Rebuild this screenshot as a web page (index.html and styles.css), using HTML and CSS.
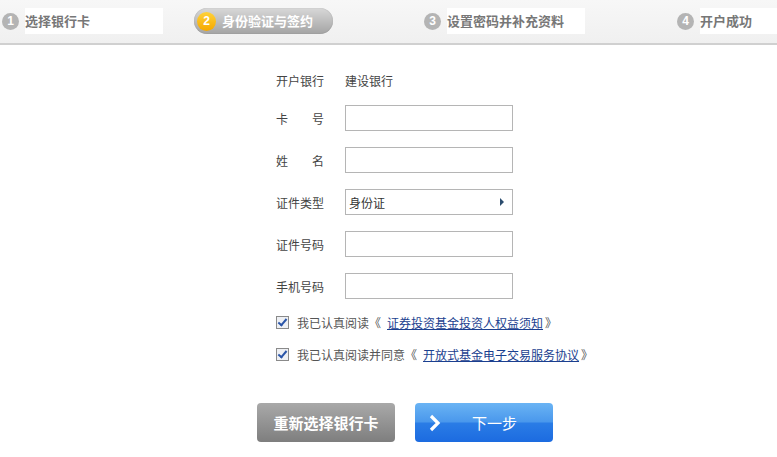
FILE: index.html
```html
<!DOCTYPE html>
<html lang="zh-CN">
<head>
    <meta charset="UTF-8">
    <title>开户 - 身份验证与签约</title>
    <link rel="stylesheet" href="styles.css">
</head>
<body>

    <!-- 步骤条 -->
    <div class="steps">
        <div class="step step-1"><span class="num">1</span><span class="name">选择银行卡</span></div>
        <div class="step step-2 current"><span class="num">2</span><span class="name">身份验证与签约</span></div>
        <div class="step step-3"><span class="num">3</span><span class="name">设置密码并补充资料</span></div>
        <div class="step step-4"><span class="num">4</span><span class="name">开户成功</span></div>
    </div>

    <div class="form">
        <div class="row row-bank">
            <label>开户银行</label>
            <span class="value">建设银行</span>
        </div>
        <div class="row">
            <label>卡　　号</label>
            <input type="text" class="field">
        </div>
        <div class="row">
            <label>姓　　名</label>
            <input type="text" class="field">
        </div>
        <div class="row">
            <label>证件类型</label>
            <div class="field select">
                <span>身份证</span>
                <i class="arrow"></i>
            </div>
        </div>
        <div class="row">
            <label>证件号码</label>
            <input type="text" class="field">
        </div>
        <div class="row">
            <label>手机号码</label>
            <input type="text" class="field">
        </div>

        <div class="agree agree-first">
            <span class="check"></span>
            <span>我已认真阅读《<a href="#">证券投资基金投资人权益须知</a>》</span>
        </div>
        <div class="agree">
            <span class="check"></span>
            <span>我已认真阅读并同意《<a href="#">开放式基金电子交易服务协议</a>》</span>
        </div>
    </div>

    <div class="actions">
        <button class="btn btn-gray">重新选择银行卡</button>
        <button class="btn btn-blue">
            <svg class="chev" width="14" height="18" viewBox="0 0 14 18"><path d="M3 2 L10 9 L3 16" fill="none" stroke="#fff" stroke-width="3.2"/></svg>
            <span>下一步</span>
        </button>
    </div>

</body>
</html>
```

FILE: styles.css
```css
body {
    margin: 0;
    padding: 0;
    background-color: #ffffff;
    font-family: "Noto Sans CJK SC", "DejaVu Sans", sans-serif;
    font-size: 12px;
    color: #444;
}

/* 步骤条 */
.steps {
    position: relative;
    height: 43px;
    border-bottom: 2px solid #d0d0d0;
    background: linear-gradient(to bottom, #f7f7f7, #f0f0f0);
}

.step {
    position: absolute;
    top: 8px;
    height: 26px;
    display: flex;
    align-items: center;
    font-size: 13px;
    font-weight: bold;
    color: #777;
}

.step .num {
    width: 17px;
    height: 17px;
    border-radius: 50%;
    background-color: #b4b4b4;
    color: #fff;
    font-size: 12px;
    line-height: 17px;
    text-align: center;
    font-family: "Liberation Sans", sans-serif;
    font-weight: bold;
    margin-right: 6px;
}

.step .name {
    background-color: #ffffff;
    height: 26px;
    line-height: 26px;
}

.step-1 { left: 2px; }
.step-1 .name { width: 138px; }

.step-2 {
    left: 194px;
    width: 139px;
    padding-left: 3px;
    box-sizing: border-box;
    border-radius: 13px;
    background: linear-gradient(to bottom, #d8d8d8, #a4a4a4);
    box-shadow: inset 0 0 1px rgba(0, 0, 0, 0.3);
    color: #fff;
}
.step-2 .name { background: none; }
.step-2 .num {
    width: 19px;
    height: 19px;
    line-height: 19px;
    background: linear-gradient(to bottom, #ffd23a, #f5a800);
}

.step-3 { left: 424px; }
.step-3 .name { width: 138px; }

.step-4 { left: 677px; }
.step-4 .name { width: 77px; }

/* 表单 */
.form {
    width: 340px;
    margin: 22px 0 0 276px;
}

.row {
    display: flex;
    align-items: center;
    height: 26px;
    margin-bottom: 16px;
}

.row-bank {
    margin-bottom: 12px;
}

.row label {
    width: 69px;
    color: #444;
}

.row .value {
    color: #444;
}

.field {
    width: 168px;
    height: 26px;
    box-sizing: border-box;
    border: 1px solid #b5b5b5;
    margin: 0;
    padding: 0 3px;
    font-family: inherit;
    font-size: 12px;
}

.select {
    display: flex;
    align-items: center;
    justify-content: space-between;
    color: #333;
    padding-left: 3px;
    padding-right: 8px;
}

.arrow {
    width: 0;
    height: 0;
    border-top: 4px solid transparent;
    border-bottom: 4px solid transparent;
    border-left: 4px solid #2b4c6e;
}

.agree {
    display: flex;
    align-items: center;
    height: 18px;
    margin-bottom: 14px;
    color: #555;
}

.agree-first {
    margin-top: -2px;
}

.check {
    width: 11px;
    height: 11px;
    border: 1px solid #8a8a8a;
    background-color: #eef0f4;
    margin-right: 8px;
    position: relative;
}

.check::after {
    content: "";
    position: absolute;
    left: 3px;
    top: 0;
    width: 3px;
    height: 7px;
    border-right: 2px solid #2a55a8;
    border-bottom: 2px solid #2a55a8;
    transform: rotate(40deg);
}

.agree a {
    color: #1b3f8f;
    text-decoration: underline;
    margin: 0 2px 0 6px;
}

/* 按钮 */
.actions {
    display: flex;
    gap: 20px;
    margin: 40px 0 0 257px;
}

.btn {
    width: 138px;
    height: 39px;
    border: none;
    border-radius: 4px;
    color: #fff;
    font-family: inherit;
    font-size: 15px;
    font-weight: bold;
    cursor: pointer;
}

.btn-gray {
    background: linear-gradient(to bottom, #a9a9a9, #7e7e7e);
}

.btn-blue {
    display: flex;
    align-items: center;
    padding: 0 0 0 13px;
    background: linear-gradient(to bottom, #6ab4f4 0%, #4a98ec 48%, #2a7ce6 52%, #1c6be0 100%);
    font-weight: normal;
}

.btn-blue .chev {
    margin-right: 30px;
}
```
